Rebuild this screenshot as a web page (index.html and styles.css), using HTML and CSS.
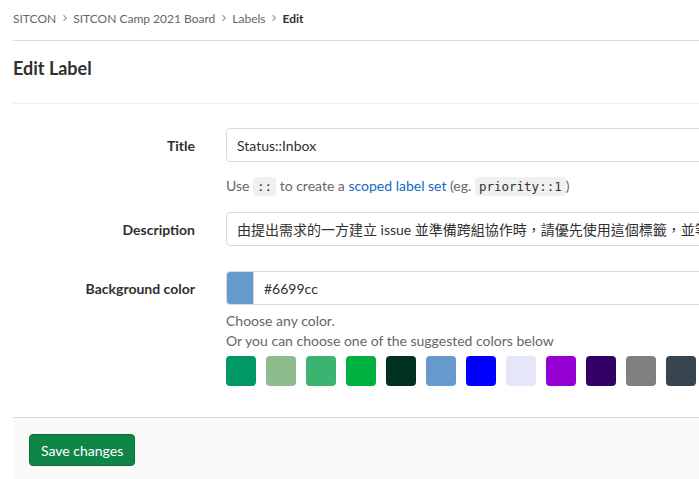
FILE: index.html
```html
<!DOCTYPE html>
<html>
<head>
<meta charset="utf-8">
<link rel="stylesheet" href="styles.css">
</head>
<body>
<div class="page">
  <nav class="crumbs">
    <span class="crumb">SITCON</span>
    <svg class="chev" width="8" height="8" viewBox="0 0 8 8"><path d="M2.5 1.2 5.3 4 2.5 6.8" fill="none" stroke="#a0a0a0" stroke-width="1.2"/></svg>
    <span class="crumb">SITCON Camp 2021 Board</span>
    <svg class="chev" width="8" height="8" viewBox="0 0 8 8"><path d="M2.5 1.2 5.3 4 2.5 6.8" fill="none" stroke="#a0a0a0" stroke-width="1.2"/></svg>
    <span class="crumb">Labels</span>
    <svg class="chev" width="8" height="8" viewBox="0 0 8 8"><path d="M2.5 1.2 5.3 4 2.5 6.8" fill="none" stroke="#a0a0a0" stroke-width="1.2"/></svg>
    <span class="crumb current">Edit</span>
  </nav>
  <h1 class="heading">Edit Label</h1>
  <form class="form">
    <div class="row tight">
      <label class="lbl">Title</label>
      <div class="field">
        <input class="input" type="text" value="Status::Inbox">
        <p class="help">Use <code>::</code> to create a <a class="link">scoped label set</a> (eg. <code>priority::1</code>)</p>
      </div>
    </div>
    <div class="row">
      <label class="lbl">Description</label>
      <div class="field">
        <input class="input" type="text" value="由提出需求的一方建立 issue 並準備跨組協作時，請優先使用這個標籤，並等待負責人處理">
      </div>
    </div>
    <div class="row">
      <label class="lbl">Background color</label>
      <div class="field">
        <div class="color-group">
          <span class="preview"></span>
          <input class="input color-input" type="text" value="#6699cc">
        </div>
        <p class="note first">Choose any color.</p>
        <p class="note">Or you can choose one of the suggested colors below</p>
        <div class="swatches">
          <span class="sw" style="background:#009966"></span>
          <span class="sw" style="background:#8fbc8f"></span>
          <span class="sw" style="background:#3cb371"></span>
          <span class="sw" style="background:#00b140"></span>
          <span class="sw" style="background:#013220"></span>
          <span class="sw" style="background:#6699cc"></span>
          <span class="sw" style="background:#0000ff"></span>
          <span class="sw" style="background:#e6e6fa"></span>
          <span class="sw" style="background:#9400d3"></span>
          <span class="sw" style="background:#330066"></span>
          <span class="sw" style="background:#808080"></span>
          <span class="sw" style="background:#36454f"></span>
        </div>
      </div>
    </div>
  </form>
  <div class="footer">
    <button class="btn" type="button">Save changes</button>
  </div>
</div>
</body>
</html>
```

FILE: styles.css
```css
html, body {
  margin: 0;
  padding: 0;
  overflow: hidden;
  background: #fff;
}
body {
  font-family: Lato, "Noto Sans CJK TC", sans-serif;
  font-size: 14px;
  color: #303030;
}
.page {
  padding-left: 13px;
  width: 900px;
}
.crumbs {
  display: flex;
  align-items: center;
  gap: 4.5px;
  font-size: 12px;
  padding-bottom: 4px;
  box-sizing: border-box;
  height: 41px;
  border-bottom: 1px solid #dbdbdb;
}
.crumb { color: #666; }
.crumb.current { color: #303030; font-weight: 700; }
.chev { flex: none; }
.heading {
  margin: 0;
  font-size: 18px;
  font-weight: 700;
  line-height: 24px;
  padding: 15px 0 23px;
  border-bottom: 1px solid #ededed;
}
.form {
  padding-top: 24px;
  padding-bottom: 31px;
}
.row {
  display: grid;
  grid-template-columns: 182px 1fr;
  column-gap: 31px;
  margin-bottom: 24px;
}
.row.tight { margin-bottom: 15px; }
.row:last-child { margin-bottom: 0; }
.lbl {
  text-align: right;
  font-weight: 700;
  line-height: 35px;
}
.input {
  display: block;
  box-sizing: border-box;
  width: 620px;
  height: 34px;
  border: 1px solid #dbdbdb;
  border-radius: 4px;
  padding: 0 10px;
  font: inherit;
  color: #303030;
  background: #fff;
  outline: none;
}
.help {
  margin: 14px 0 0;
  color: #666;
  line-height: 20px;
}
code {
  font-family: "DejaVu Sans Mono", monospace;
  font-size: 12.5px;
  background: #f0f0f0;
  border-radius: 4px;
  padding: 2px 4px;
  color: #303030;
}
.link { color: #1068bf; }
.color-group {
  display: flex;
  width: 620px;
}
.preview {
  flex: none;
  width: 28px;
  height: 34px;
  box-sizing: border-box;
  background: #6699cc;
  border: 1px solid #dbdbdb;
  border-radius: 4px 0 0 4px;
}
.color-input {
  border-left: none;
  border-radius: 0 4px 4px 0;
  flex: 1;
}
.note {
  margin: 0;
  color: #666;
  line-height: 20px;
}
.note.first { margin-top: 6px; }
.swatches {
  display: flex;
  gap: 10px;
  margin-top: 5px;
}
.sw {
  flex: none;
  width: 30px;
  height: 30px;
  border-radius: 4px;
}
.footer {
  border-top: 1px solid #dbdbdb;
  background: #fafafa;
  padding: 16px 16px 40px;
  height: 100px;
}
.btn {
  background: #108548;
  color: #fff;
  border: 1px solid #0d6e3c;
  border-radius: 4px;
  font: inherit;
  height: 32px;
  padding: 0 11px;
}
```
